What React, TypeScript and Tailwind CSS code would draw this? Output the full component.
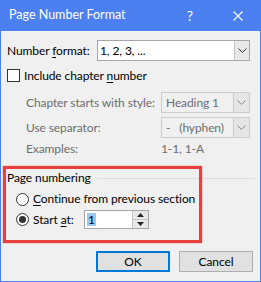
import React from "react";

const Chevron = ({ color = "#333" }: { color?: string }) => (
  <svg width="9" height="5" viewBox="0 0 9 5">
    <path d="M0.5 0.5 L4.5 4.5 L8.5 0.5" fill="none" stroke={color} strokeWidth="1" />
  </svg>
);

function Combo({
  text,
  disabled,
  width,
}: {
  text: string;
  disabled?: boolean;
  width: string;
}) {
  return (
    <div
      className={
        disabled
          ? `flex h-[21px] ${width} border border-[#cccccc] bg-[#f0f0f0]`
          : `flex h-[21px] ${width} border border-[#a6a6a6] bg-white`
      }
    >
      <div
        className={
          disabled
            ? "flex-1 flex items-center pl-[4px] text-[#6d6d6d] whitespace-pre"
            : "flex-1 flex items-center pl-[2px] text-black whitespace-pre"
        }
      >
        {text}
      </div>
      <div
        className={
          disabled
            ? "w-[16px] flex items-center justify-center bg-[#e6e6e6] border-l border-[#cccccc]"
            : "w-[15px] flex items-center justify-center bg-[#e8e8e8] border-l border-[#c4c4c4]"
        }
      >
        <Chevron color={disabled ? "#888" : "#333"} />
      </div>
    </div>
  );
}

function Radio({ checked }: { checked?: boolean }) {
  return (
    <div className="w-[13px] h-[13px] rounded-full border border-[#333] bg-white flex items-center justify-center">
      {checked && <div className="w-[7px] h-[7px] rounded-full bg-[#333]" />}
    </div>
  );
}

export default function App() {
  return (
    <div
      className="w-[261px] h-[282px] bg-[#f0f0f0] border-x border-b border-[#4c7ff0] flex flex-col text-[12px] leading-none text-black whitespace-nowrap tracking-[-0.1px]"
      style={{ fontFamily: 'Lato, "Noto Sans", sans-serif' }}
    >
      {/* title bar */}
      <div className="h-[31px] bg-[#4c7ff0] flex items-center text-white -mx-px tracking-normal">
        <div className="pl-[9px] flex-1 text-[12.5px]">Page Number Format</div>
        <div className="w-[20px] text-[14px] mr-[33px] text-center">?</div>
        <div className="mr-[18px]">
          <svg width="10" height="10" viewBox="0 0 10 10">
            <path d="M0.5 0.5 L9.5 9.5 M9.5 0.5 L0.5 9.5" stroke="white" strokeWidth="1.1" />
          </svg>
        </div>
      </div>

      {/* number format */}
      <div className="mt-[9px] h-[21px] flex items-center pl-[6px]">
        <div className="w-[90px]">
          Number <u className="underline-offset-2">f</u>ormat:
        </div>
        <Combo text="1, 2, 3, ..." width="w-[153px]" />
      </div>

      {/* include chapter number */}
      <div className="mt-[8px] h-[13px] flex items-center pl-[6px]">
        <div className="w-[13px] h-[13px] border border-[#333] bg-white" />
        <div className="ml-[4px]">
          Include chapter <u className="underline-offset-2">n</u>umber
        </div>
      </div>

      {/* chapter starts with style */}
      <div className="mt-[10px] h-[21px] flex items-center pl-[25px] text-[#6d6d6d]">
        <div className="w-[135px]">Chapter starts with style:</div>
        <Combo text="Heading 1" width="w-[89px]" disabled />
      </div>

      {/* separator */}
      <div className="mt-[4px] h-[21px] flex items-center pl-[25px] text-[#6d6d6d]">
        <div className="w-[135px]">Use separator:</div>
        <Combo text="-   (hyphen)" width="w-[89px]" disabled />
      </div>

      {/* examples */}
      <div className="mt-[3px] h-[15px] flex items-center pl-[25px] text-[#6d6d6d]">
        <div className="w-[135px]">Examples:</div>
        <div>1-1, 1-A</div>
      </div>

      {/* page numbering group */}
      <div className="relative mt-[10px] h-[77px] flex flex-col pt-[4px]">
        <div className="h-[16px] flex items-center pl-[6px] pr-[5px]">
          <div>Page numbering</div>
          <div className="flex-1 ml-[6px] h-px bg-[#dcdcdc]" />
        </div>
        <div className="mt-[5px] h-[16px] flex items-center pl-[15px]">
          <Radio />
          <div className="ml-[4px]">
            <u className="underline-offset-2">C</u>ontinue from previous section
          </div>
        </div>
        <div className="mt-[3px] h-[19px] flex items-center pl-[15px]">
          <Radio checked />
          <div className="ml-[4px] w-[51px]">
            Start <u className="underline-offset-2">a</u>t:
          </div>
          <div className="flex h-[19px] w-[65px] border border-[#a6a6a6] bg-white">
            <div className="flex-1 flex items-center pl-[2px]">
              <span className="bg-[#99c9ef] px-px leading-[13px]">1</span>
            </div>
            <div className="w-[16px] flex flex-col border-l border-[#c4c4c4] bg-[#e8e8e8]">
              <div className="flex-1 flex items-center justify-center border-b border-[#c4c4c4]">
                <svg width="7" height="4" viewBox="0 0 7 4">
                  <path d="M0 4 L3.5 0 L7 4 Z" fill="#222" />
                </svg>
              </div>
              <div className="flex-1 flex items-center justify-center">
                <svg width="7" height="4" viewBox="0 0 7 4">
                  <path d="M0 0 L3.5 4 L7 0 Z" fill="#222" />
                </svg>
              </div>
            </div>
          </div>
        </div>
        <div className="absolute left-[2px] top-0 w-[199px] h-[77px] border-[3px] border-[#e8403f] shadow-[0_0_1px_#e8403f]" />
      </div>

      {/* buttons */}
      <div className="mt-[8px] h-[21px] flex justify-end pr-[7px] gap-[9px]">
        <div className="w-[74px] h-[21px] border-2 border-[#0078d7] bg-[#e1e1e1] flex items-center justify-center">
          OK
        </div>
        <div className="w-[74px] h-[21px] border border-[#adadad] bg-[#e1e1e1] flex items-center justify-center">
          Cancel
        </div>
      </div>
    </div>
  );
}
